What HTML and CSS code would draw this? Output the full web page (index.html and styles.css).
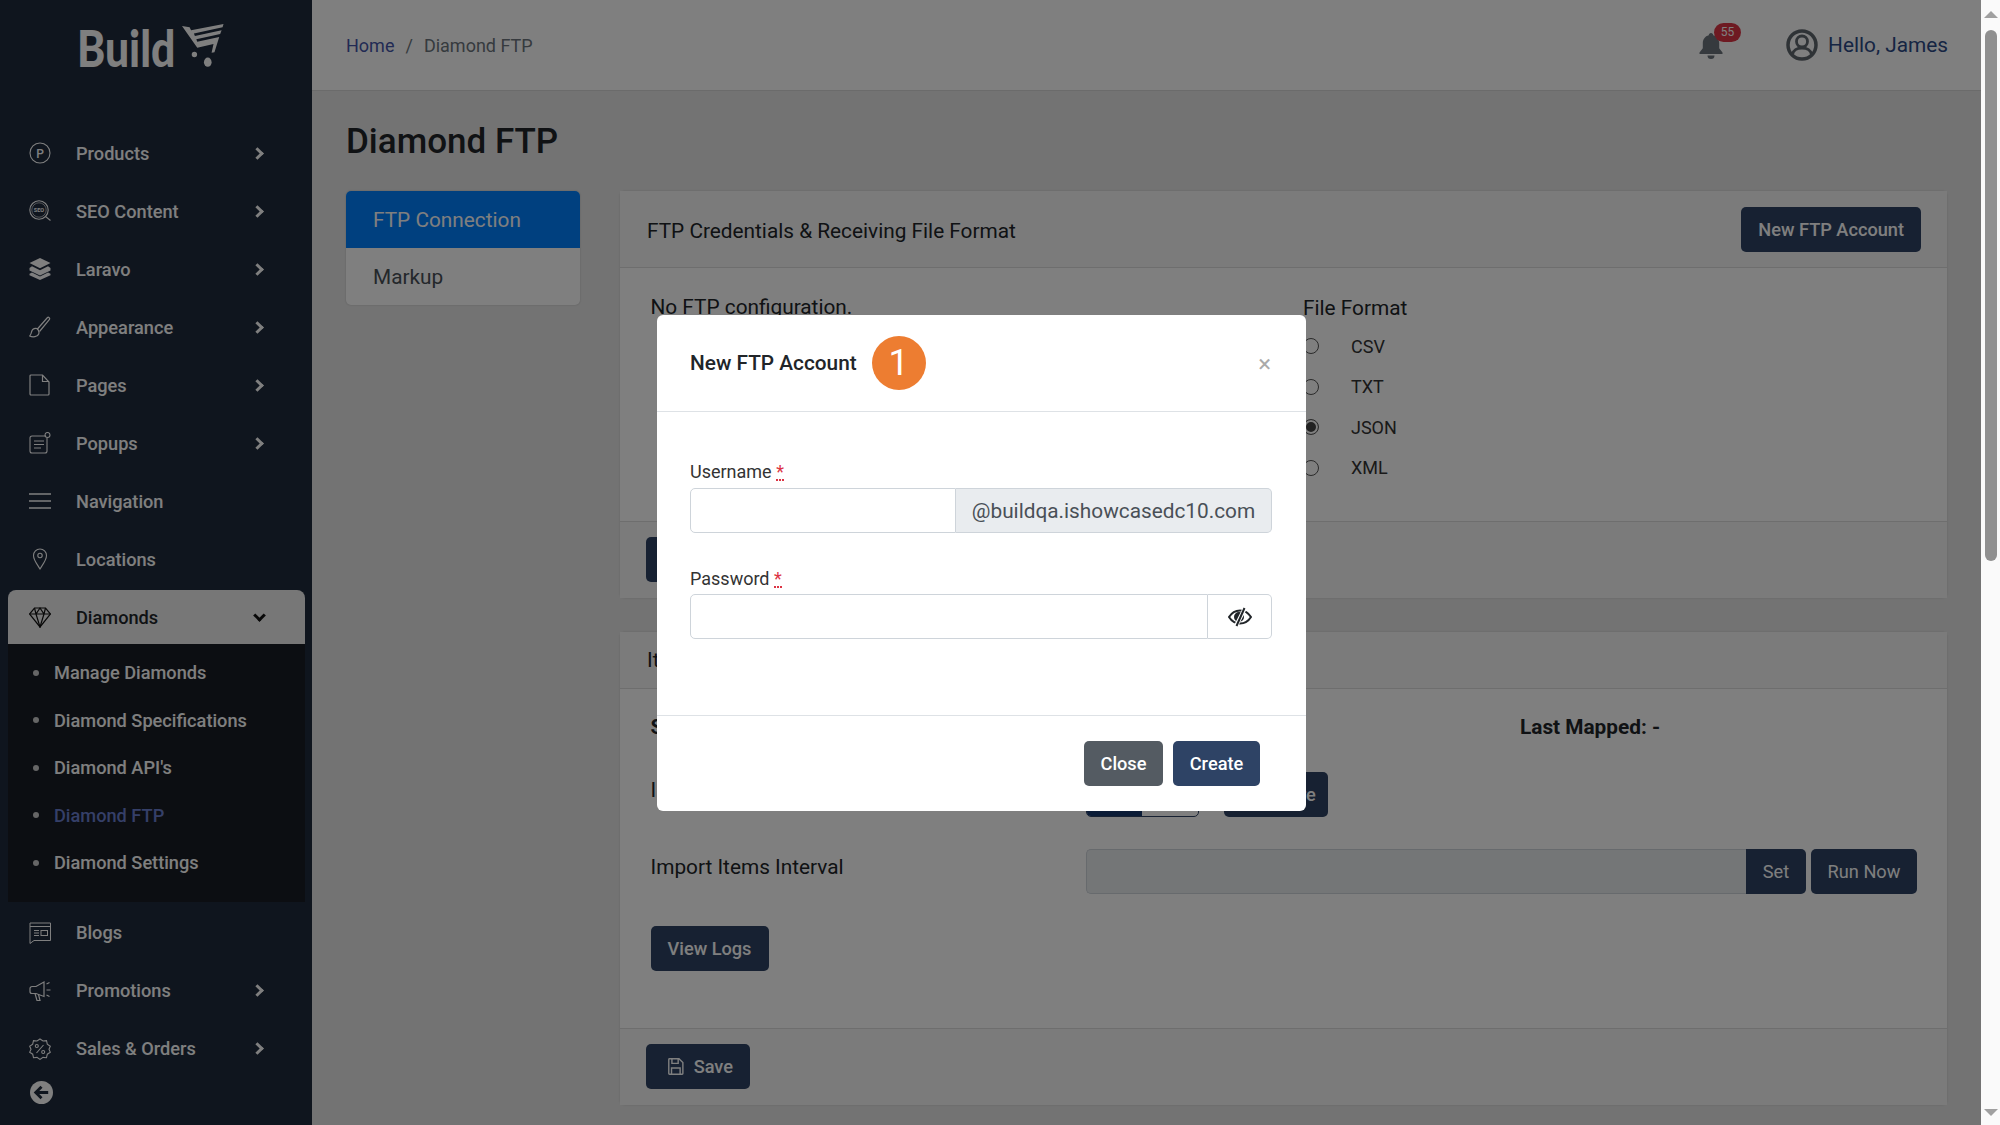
FILE: index.html
```html
<!DOCTYPE html>
<html lang="en">
<head>
    <meta charset="UTF-8">
    <meta name="viewport" content="width=device-width, initial-scale=1.0">
    <title>Diamond FTP</title>
    <link rel="stylesheet" href="styles.css">
</head>
<body>

<div class="page">

    <!-- Sidebar -->
    <aside class="sidebar">
        <div class="logo">
            <span class="logo-text">Build</span>
            <svg class="logo-cart" viewBox="0 0 44 46" fill="#fff">
                <path d="M0 3l8 1.500 1.500 3 34-6.500-1 3.500-30 6.500 1 2.500 28-6-1.500 4-25 5.500 1 2.500 23-5-5 16-3 .5 2-9-17 4z"/>
                <circle cx="13" cy="33" r="2.800"/>
                <ellipse cx="27" cy="41" rx="4" ry="4.800"/>
            </svg>
        </div>

        <nav class="menu">
            <a class="menu-item">
                <svg class="menu-icon" viewBox="0 0 22 22" fill="none" stroke="#fff" stroke-width="1.100"><circle cx="11" cy="11" r="10"/><text x="11" y="15.500" font-size="12" font-family="Roboto, sans-serif" fill="#fff" stroke="none" text-anchor="middle">P</text></svg>
                <span class="menu-label">Products</span><i class="chevron"></i>
            </a>
            <a class="menu-item">
                <svg class="menu-icon" viewBox="0 0 22 22" fill="none" stroke="#fff" stroke-width="1.100"><circle cx="10" cy="10" r="9.200"/><circle cx="10" cy="10" r="7.200" stroke-width=".6"/><path d="M16.500 16.500l5 4"/><text x="10" y="12" font-size="5.500" font-weight="700" font-family="Roboto, sans-serif" fill="#fff" stroke="none" text-anchor="middle">SEO</text></svg>
                <span class="menu-label">SEO Content</span><i class="chevron"></i>
            </a>
            <a class="menu-item">
                <svg class="menu-icon" viewBox="0 0 22 22" fill="#fff"><path d="M11 0l10.500 5-10.500 5.200L.5 5z"/><path d="M3 8.200l8 4 8-4 2.500 1.800v2.500L11 17.500.5 12.500V10z"/><path d="M3 14.500l8 4 8-4 2.500 1.200v1.500L11 22 .5 17.200v-1.500z"/></svg>
                <span class="menu-label">Laravo</span><i class="chevron"></i>
            </a>
            <a class="menu-item">
                <svg class="menu-icon" viewBox="0 0 22 22" fill="none" stroke="#fff" stroke-width="1.200"><path d="M8 13.500L18.500 1.500c1-.8 2.800.8 2 2L10.500 15.500"/><path d="M8 12.500c-3-.5-5 1.500-5.500 3.500-.3 1.800-1 3-1.800 4 3 1.500 8 1 9-2 .7-2 .5-3.500-1.700-5.500z"/></svg>
                <span class="menu-label">Appearance</span><i class="chevron"></i>
            </a>
            <a class="menu-item">
                <svg class="menu-icon" viewBox="0 0 22 22" fill="none" stroke="#fff" stroke-width="1.200"><path d="M2 1h11.500l6.500 7v12a1 1 0 0 1-1 1H2a1 1 0 0 1-1-1V2a1 1 0 0 1 1-1z"/><path d="M13.500 1v6.500H20"/></svg>
                <span class="menu-label">Pages</span><i class="chevron"></i>
            </a>
            <a class="menu-item">
                <svg class="menu-icon" viewBox="0 0 22 22" fill="none" stroke="#fff" stroke-width="1.100"><path d="M17 4H3a2 2 0 0 0-2 2v13a2 2 0 0 0 2 2h13a2 2 0 0 0 2-2V6"/><path d="M5 9h10M5 12.500h10M5 16h7"/><circle cx="18.500" cy="3" r="2.500"/></svg>
                <span class="menu-label">Popups</span><i class="chevron"></i>
            </a>
            <a class="menu-item">
                <svg class="menu-icon" viewBox="0 0 22 22" fill="none" stroke="#fff" stroke-width="1.400"><path d="M0 4h22M0 11h22M0 18h22"/></svg>
                <span class="menu-label">Navigation</span>
            </a>
            <a class="menu-item">
                <svg class="menu-icon" viewBox="0 0 22 22" fill="none" stroke="#fff" stroke-width="1.100"><path d="M11 21C8 16 4.500 12 4.500 7.500a6.500 6.500 0 0 1 13 0C17.500 12 14 16 11 21z"/><circle cx="11" cy="7.500" r="2.200"/></svg>
                <span class="menu-label">Locations</span>
            </a>
            <a class="menu-item menu-item-active">
                <svg class="menu-icon" viewBox="0 0 22 22" fill="none" stroke="#111" stroke-width="1.200"><path d="M5.500 2h11L21.500 8 11 21 .5 8z"/><path d="M.5 8h21M7 8l4 13 4-13M5.500 2L7 8l4-6 4 6 1.500-6"/></svg>
                <span class="menu-label">Diamonds</span><i class="chevron chevron-down"></i>
            </a>
            <div class="submenu">
                <a class="submenu-item">Manage Diamonds</a>
                <a class="submenu-item">Diamond Specifications</a>
                <a class="submenu-item">Diamond API's</a>
                <a class="submenu-item submenu-item-active">Diamond FTP</a>
                <a class="submenu-item">Diamond Settings</a>
            </div>
            <a class="menu-item">
                <svg class="menu-icon" viewBox="0 0 22 22" fill="none" stroke="#fff" stroke-width="1"><path d="M1 1h20.500v17.500H5l-4 3z"/><path d="M1 4.500h20.500M5 8.500h5M5 11h5M5 13.500h5"/><rect x="12" y="8.500" width="6.500" height="5"/></svg>
                <span class="menu-label">Blogs</span>
            </a>
            <a class="menu-item">
                <svg class="menu-icon" viewBox="0 0 22 22" fill="none" stroke="#fff" stroke-width="1.200"><path d="M15 2L7 6.500H3a2 2 0 0 0-2 2v3a2 2 0 0 0 2 2h4l8 3z"/><path d="M6 13.500l2 7h3l-1.500-6M17.500 4l3-1.500M17.500 10h4M17.500 15l3 1.500"/></svg>
                <span class="menu-label">Promotions</span><i class="chevron"></i>
            </a>
            <a class="menu-item">
                <svg class="menu-icon" viewBox="0 0 22 22" fill="none" stroke="#fff" stroke-width="1.100"><path d="M11 1l3 2 3.500-.3.800 3.500 3 2-1.300 3 1.300 3-3 2-.8 3.500-3.500-.3-3 2-3-2-3.500.3-.8-3.500-3-2 1.300-3L.7 8.200l3-2 .8-3.500 3.500.3z"/><path d="M7.500 15L14.500 7"/><circle cx="7.800" cy="8" r="1.500"/><circle cx="14.200" cy="14" r="1.500"/></svg>
                <span class="menu-label">Sales &amp; Orders</span><i class="chevron"></i>
            </a>
        </nav>

        <div class="collapse-btn">
            <svg viewBox="0 0 24 24" fill="none" stroke="#1e2a3c" stroke-width="3"><path d="M19 12H7M12 6l-6 6 6 6"/></svg>
        </div>
    </aside>

    <!-- Main area -->
    <main class="main">
        <header class="topbar">
            <div class="breadcrumb">
                <a class="crumb-link">Home</a>
                <span class="crumb-sep">/</span>
                <span>Diamond FTP</span>
            </div>
            <div class="topbar-right">
                <div class="bell">
                    <svg viewBox="0 0 24 26" fill="#6c757d"><path d="M12 0c1.300 0 2.200 1 2.200 2.200 3.800 1 6 4 6 8v5l3.300 4.300v1.500H.5v-1.500L3.800 15.200v-5c0-4 2.200-7 6-8C9.800 1 10.700 0 12 0z"/><path d="M8.500 22.500h7a3.500 3.500 0 0 1-7 0z"/></svg>
                    <span class="bell-badge">55</span>
                </div>
                <svg class="user-icon" viewBox="0 0 32 32" fill="none" stroke="#5f666d" stroke-width="3.500"><circle cx="16" cy="16" r="14"/><circle cx="16" cy="12.500" r="5.500" stroke-width="2.800"/><path d="M6.500 25.500c.5-4 4.500-6.500 9.500-6.500s9 2.500 9.500 6.500" stroke-width="2.800"/></svg>
                <a class="hello">Hello, James</a>
            </div>
        </header>

        <div class="content">
            <h1 class="page-title">Diamond FTP</h1>

            <div class="content-row">
                <div class="tabs">
                    <a class="tab tab-active">FTP Connection</a>
                    <a class="tab">Markup</a>
                </div>

                <div class="cards">
                    <section class="card card-ftp">
                        <div class="card-header">
                            <span class="card-title">FTP Credentials &amp; Receiving File Format</span>
                            <button class="btn btn-dark">New FTP Account</button>
                        </div>
                        <div class="card-body ftp-body">
                            <div class="ftp-col">No FTP configuration.</div>
                            <div class="ftp-format">
                                <div class="format-title">File Format</div>
                                <label class="radio-row"><i class="radio"></i>CSV</label>
                                <label class="radio-row"><i class="radio"></i>TXT</label>
                                <label class="radio-row"><i class="radio radio-on"></i>JSON</label>
                                <label class="radio-row"><i class="radio"></i>XML</label>
                            </div>
                        </div>
                        <div class="card-footer">
                            <button class="btn btn-dark">Save</button>
                        </div>
                    </section>

                    <section class="card card-items">
                        <div class="card-header card-header-plain">Items Import</div>
                        <div class="card-body items-body">
                            <div class="items-row items-status">
                                <b class="items-label">Status: -</b>
                                <b>Last Mapped: -</b>
                            </div>
                            <div class="items-row items-import">
                                <span class="items-label items-label-up">Import Items</span>
                                <div class="toggle"><i class="toggle-on"></i></div>
                                <button class="btn btn-dark btn-wide">Configure</button>
                            </div>
                            <div class="items-row items-interval">
                                <span class="items-label items-label-up">Import Items Interval</span>
                                <div class="interval-group">
                                    <input class="interval-input" disabled>
                                    <button class="btn btn-dark btn-set">Set</button>
                                </div>
                                <button class="btn btn-dark btn-run">Run Now</button>
                            </div>
                            <button class="btn btn-dark btn-logs">View Logs</button>
                        </div>
                        <div class="card-footer">
                            <button class="btn btn-dark btn-save">
                                <svg viewBox="0 0 20 22" fill="none" stroke="#fff" stroke-width="1.800"><path d="M2 1h12l5 5v14a1 1 0 0 1-1 1H2a1 1 0 0 1-1-1V2a1 1 0 0 1 1-1z"/><path d="M5 1v6h8V1M4.500 21v-8h11v8"/></svg>
                                Save
                            </button>
                        </div>
                    </section>
                </div>
            </div>
        </div>
    </main>

    <!-- Modal -->
    <div class="backdrop">
        <div class="modal">
            <div class="modal-header">
                <span class="modal-title">New FTP Account</span>
                <span class="step-badge">1</span>
                <span class="modal-close">&times;</span>
            </div>
            <div class="modal-body">
                <label class="field-label">Username <span class="req">*</span></label>
                <div class="input-group">
                    <input class="field-input field-user">
                    <span class="input-addon">@buildqa.ishowcasedc10.com</span>
                </div>
                <label class="field-label field-label-pass">Password <span class="req">*</span></label>
                <div class="input-group">
                    <input class="field-input field-pass">
                    <span class="eye-addon">
                        <svg viewBox="0 0 24 20" fill="none" stroke="#212529" stroke-width="2"><path d="M1 10c2.500-4 6-6.500 11-6.500S20.500 6 23 10c-2.500 4-6 6.500-11 6.500S3.500 14 1 10z"/><circle cx="11" cy="10" r="4" fill="#212529"/><path d="M17 1L8 19" stroke="#fff" stroke-width="4"/><path d="M16.500 1L8.500 19" stroke-width="2"/></svg>
                    </span>
                </div>
            </div>
            <div class="modal-footer">
                <button class="btn btn-grey">Close</button>
                <button class="btn btn-blue">Create</button>
            </div>
        </div>
    </div>
</div>

<!-- Scrollbar -->
<div class="scrollbar">
    <i class="scroll-up"></i>
    <div class="scroll-thumb"></div>
    <i class="scroll-down"></i>
</div>

</body>
</html>
```

FILE: styles.css
```css
* {
    margin: 0;
    padding: 0;
    box-sizing: border-box;
}

body {
    font-family: Roboto, 'Liberation Sans', sans-serif;
    color: #212529;
    display: flex;
    height: 1125px;
    overflow: hidden;
    background-color: #e6e6e6;
}

.page {
    position: relative;
    display: flex;
    flex: 1;
    min-width: 0;
}

/* Sidebar */
.sidebar {
    width: 312px;
    flex-shrink: 0;
    background-color: #1e2a3c;
    color: #fff;
}

.logo {
    height: 124px;
    display: flex;
    align-items: flex-start;
    padding: 22px 0 0 77px;
}

/* the logo face is narrower than anything installed, so squeeze it */
.logo-text {
    display: inline-block;
    width: 101px;
    font-family: Lato, sans-serif;
    font-size: 52px;
    font-weight: 900;
    line-height: 50px;
    white-space: nowrap;
    transform: scaleX(0.82);
    transform-origin: left center;
}

.logo-cart {
    width: 42px;
    height: 46px;
    margin-left: 4px;
}

.menu-item {
    display: flex;
    align-items: center;
    height: 58px;
    padding-left: 29px;
    font-size: 18.200px;
    font-weight: 500;
}

.menu-icon {
    width: 22px;
    height: 22px;
    flex-shrink: 0;
}

.menu-label {
    margin-left: 25px;
    width: 177px;
}

.chevron {
    width: 9px;
    height: 9px;
    border-top: 3px solid #fff;
    border-right: 3px solid #fff;
    transform: rotate(45deg);
}

.chevron-down {
    margin-top: -4px;
    margin-left: 2px;
    border-color: #111;
    transform: rotate(135deg);
}

.menu-item-active {
    height: 54px;
    margin: 2px 7px 0 8px;
    padding-left: 21px;
    background-color: #eeeeee;
    border-radius: 8px 8px 0 0;
    color: #212529;
}

.submenu {
    margin: 0 7px 2px 8px;
    padding: 5px 0 15px;
    background-color: #181c24;
}

.submenu-item {
    display: flex;
    align-items: center;
    height: 47.500px;
    padding-left: 25px;
    font-size: 18.200px;
    font-weight: 500;
}

.submenu-item::before {
    content: "";
    width: 6px;
    height: 6px;
    margin-right: 15px;
    border-radius: 50%;
    background-color: #ccc;
}

.submenu-item-active {
    color: #6a7fd0;
}

.collapse-btn {
    width: 23px;
    height: 23px;
    margin: 3px 0 0 30px;
    border-radius: 50%;
    background-color: #fff;
    display: flex;
}

/* Main */
.main {
    flex: 1;
    min-width: 0;
}

.topbar {
    height: 91px;
    display: flex;
    justify-content: space-between;
    align-items: center;
    padding: 0 33px 0 34px;
    background-color: #fff;
    border-bottom: 1px solid #d6d6d6;
}

.breadcrumb {
    display: flex;
    font-size: 18px;
    color: #6c757d;
}

.crumb-link {
    color: #4455a8;
}

.crumb-sep {
    margin: 0 11px;
}

.topbar-right {
    display: flex;
    align-items: center;
}

.bell {
    position: relative;
    width: 24px;
    height: 26px;
    margin-top: 2px;
    margin-right: 63px;
}

.bell svg {
    display: block;
    width: 24px;
    height: 26px;
}

.bell-badge {
    position: absolute;
    top: -10px;
    left: 15px;
    width: 27px;
    height: 19px;
    border-radius: 10px;
    background-color: #dc3545;
    color: #fff;
    font-size: 12px;
    line-height: 19px;
    text-align: center;
}

.user-icon {
    width: 32px;
    height: 32px;
    margin-right: 10px;
}

.hello {
    font-size: 20.800px;
    color: #2c4a86;
}

.content {
    padding: 0 34px;
}

.page-title {
    height: 100px;
    padding-top: 31px;
    font-size: 35px;
    font-weight: 500;
    line-height: 40px;
}

.content-row {
    display: flex;
    gap: 40px;
    align-items: flex-start;
}

/* Tabs */
.tabs {
    width: 234px;
    flex-shrink: 0;
    background-color: #fff;
    border-radius: 5px;
    overflow: hidden;
    box-shadow: 0 0 2px rgba(0, 0, 0, 0.2);
    font-size: 20.800px;
}

.tab {
    display: block;
    height: 57px;
    padding-left: 27px;
    line-height: 58px;
    color: #495057;
}

.tab-active {
    background-color: #0080ff;
    color: #fff;
}

/* Cards */
.cards {
    flex: 1;
    min-width: 0;
}

.card {
    background-color: #fff;
    border-radius: 5px;
    box-shadow: 0 0 2px rgba(0, 0, 0, 0.15);
}

.card-ftp {
    height: 407px;
    margin-bottom: 34px;
    display: flex;
    flex-direction: column;
}

.card-items {
    height: 473px;
    display: flex;
    flex-direction: column;
}

.card-header {
    height: 77px;
    flex-shrink: 0;
    display: flex;
    justify-content: space-between;
    align-items: center;
    padding: 0 26px 0 27px;
    background-color: #f7f7f7;
    border-bottom: 1px solid #dcdcdc;
    font-size: 20.800px;
}

.card-title {
    margin-top: 3px;
}

.card-header-plain {
    height: 57px;
}

.card-body {
    flex: 1;
}

.card-footer {
    height: 77px;
    flex-shrink: 0;
    display: flex;
    align-items: center;
    padding: 0 0 2px 26px;
    background-color: #f7f7f7;
    border-top: 1px solid #dcdcdc;
}

.ftp-body {
    display: flex;
    padding: 26px 31px 0 30.500px;
    font-size: 20.800px;
}

.ftp-col {
    width: 652.500px;
    padding-top: 1px;
}

.format-title {
    line-height: 28px;
    margin-bottom: 4px;
}

.radio-row {
    display: flex;
    align-items: center;
    height: 40.500px;
    font-size: 18px;
    color: #333;
}

.radio {
    width: 16px;
    height: 16px;
    margin: 0 32px 0 0;
    border: 1px solid #555;
    border-radius: 50%;
    background-color: #fff;
}

.radio-on {
    border-color: #555;
    box-shadow: inset 0 0 0 2px #fff, inset 0 0 0 8px #444;
}

.items-body {
    padding: 26px 30px 0 30.500px;
    font-size: 20.800px;
}

.items-row {
    display: flex;
    align-items: center;
}

.items-label {
    width: 435.500px;
    flex-shrink: 0;
}

.items-label-up {
    margin-bottom: 10px;
}

.items-status {
    height: 24px;
    margin-bottom: 33px;
}

.items-status b:last-child {
    padding-left: 434px;
}

.items-import {
    height: 45px;
    margin-bottom: 32px;
}

.toggle {
    width: 113px;
    height: 45px;
    border: 1px solid #2e4365;
    border-radius: 5px;
    overflow: hidden;
    background-color: #fff;
}

.toggle-on {
    display: block;
    width: 55px;
    height: 100%;
    background-color: #16386e;
}

.btn {
    border: none;
    border-radius: 5px;
    font-family: inherit;
    font-size: 18.200px;
    font-weight: 500;
    color: #fff;
    height: 45px;
    padding: 0 17px;
}

.btn-dark {
    background-color: #2e4365;
}

.btn-wide {
    width: 104px;
    margin-left: 25px;
    padding: 0;
}

.interval-group {
    display: flex;
    flex: 1;
}

.interval-input {
    flex: 1;
    min-width: 0;
    height: 45px;
    border: 1px solid #ced4da;
    border-right: none;
    border-radius: 5px 0 0 5px;
    background-color: #e9ecef;
}

.btn-set {
    width: 60px;
    padding: 0;
    border-radius: 0 5px 5px 0;
    font-weight: 400;
}

.btn-run {
    width: 106px;
    margin-left: 5px;
    padding: 0;
    font-weight: 400;
}

.btn-logs {
    display: block;
    width: 118px;
    margin-top: 32px;
    padding: 0;
}

.btn-save {
    display: flex;
    align-items: center;
    gap: 10px;
    width: 104px;
    padding-left: 22px;
}

.btn-save svg {
    width: 19px;
    height: 21px;
}

/* Modal */
.backdrop {
    position: absolute;
    inset: 0;
    background-color: rgba(0, 0, 0, 0.5);
}

.modal {
    position: absolute;
    top: 315px;
    left: 657px;
    width: 649px;
    height: 496px;
    display: flex;
    flex-direction: column;
    background-color: #fff;
    border-radius: 6px;
}

.modal-header {
    height: 97px;
    flex-shrink: 0;
    display: flex;
    align-items: center;
    padding: 0 35px 0 33px;
    border-bottom: 1px solid #dee2e6;
}

.modal-title {
    font-size: 20.800px;
    font-weight: 500;
}

.step-badge {
    width: 54px;
    height: 54px;
    margin-left: 15px;
    border-radius: 50%;
    background-color: #ed7d31;
    color: #fff;
    font-size: 36px;
    line-height: 54px;
    text-align: center;
}

.modal-close {
    margin-left: auto;
    margin-top: 2px;
    font-size: 24px;
    color: #aaa;
}

.modal-body {
    flex: 1;
    padding: 48px 34px 0 33px;
}

.field-label {
    display: block;
    height: 28px;
    font-size: 18px;
    line-height: 24px;
    color: #333;
}

.field-label-pass {
    margin-top: 34px;
    height: 27px;
    line-height: 24px;
}

.req {
    color: #dc3545;
    border-bottom: 2px dotted #dc3545;
    line-height: 14px;
    display: inline-block;
}

.input-group {
    display: flex;
    height: 45px;
}

.field-input {
    flex: 1;
    min-width: 0;
    border: 1px solid #ced4da;
    border-radius: 5px 0 0 5px;
    background-color: #fff;
}

.field-user {
    flex: 0 0 266px;
}

.input-addon {
    flex: 1;
    display: flex;
    align-items: center;
    justify-content: center;
    background-color: #e9ecef;
    border: 1px solid #ced4da;
    border-left: none;
    border-radius: 0 5px 5px 0;
    font-size: 20.800px;
    color: #495057;
    white-space: nowrap;
}

.eye-addon {
    flex: 0 0 64px;
    display: flex;
    align-items: center;
    justify-content: center;
    border: 1px solid #ced4da;
    border-left: none;
    border-radius: 0 5px 5px 0;
}

.eye-addon svg {
    width: 24px;
    height: 20px;
}

.modal-footer {
    height: 96px;
    flex-shrink: 0;
    display: flex;
    justify-content: flex-end;
    gap: 10px;
    padding: 25px 46px 0 0;
    border-top: 1px solid #dee2e6;
}

.btn-grey {
    width: 79px;
    padding: 0;
    background-color: #545b62;
}

.btn-blue {
    width: 87px;
    padding: 0;
    background-color: #2e4365;
}

/* Scrollbar */
.scrollbar {
    width: 19px;
    flex-shrink: 0;
    display: flex;
    flex-direction: column;
    align-items: center;
    padding: 11px 0 9px;
    background-color: #fafafa;
}

.scroll-up,
.scroll-down {
    width: 0;
    height: 0;
    border-left: 7px solid transparent;
    border-right: 7px solid transparent;
}

.scroll-up {
    border-bottom: 7px solid #a0a0a0;
}

.scroll-down {
    margin-top: auto;
    border-top: 7px solid #a0a0a0;
}

.scroll-thumb {
    width: 12px;
    height: 531px;
    margin-top: 12px;
    border-radius: 6px;
    background-color: #909090;
}
```
